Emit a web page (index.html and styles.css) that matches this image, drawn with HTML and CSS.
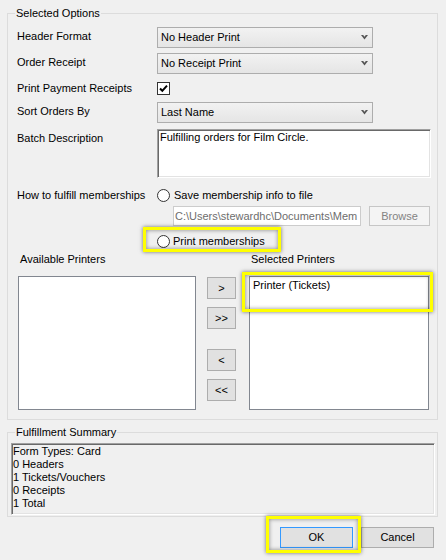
FILE: index.html
```html
<!DOCTYPE html>
<html>
<head>
<meta charset="utf-8">
<title>Fulfillment</title>
<link rel="stylesheet" href="styles.css">
</head>
<body>
<div class="dialog">
  <div class="group g1">
    <span class="legend">Selected Options</span>
    <div class="row r-a">
      <span class="lbl">Header Format</span>
      <div class="combo"><span>No Header Print</span><svg class="chev" width="7" height="5" viewBox="0 0 7 5"><polygon points="0,0 2.2,0 3.5,1.8 4.8,0 7,0 3.5,4.6" fill="#555"/></svg></div>
    </div>
    <div class="row r-b">
      <span class="lbl">Order Receipt</span>
      <div class="combo"><span>No Receipt Print</span><svg class="chev" width="7" height="5" viewBox="0 0 7 5"><polygon points="0,0 2.2,0 3.5,1.8 4.8,0 7,0 3.5,4.6" fill="#555"/></svg></div>
    </div>
    <div class="row r-c">
      <span class="lbl">Print Payment Receipts</span>
      <span class="check"><svg width="11" height="11" viewBox="0 0 11 11"><path d="M2 5.5 L4.3 7.8 L9 2.6" fill="none" stroke="#000" stroke-width="2"/></svg></span>
    </div>
    <div class="row r-d">
      <span class="lbl">Sort Orders By</span>
      <div class="combo"><span>Last Name</span><svg class="chev" width="7" height="5" viewBox="0 0 7 5"><polygon points="0,0 2.2,0 3.5,1.8 4.8,0 7,0 3.5,4.6" fill="#555"/></svg></div>
    </div>
    <div class="row r-e">
      <span class="lbl lbl-top">Batch Description</span>
      <div class="memo">Fulfilling orders for Film Circle.</div>
    </div>
    <div class="row r-f">
      <span class="lbl">How to fulfill memberships</span>
      <span class="radio"></span><span class="rtext">Save membership info to file</span>
    </div>
    <div class="row r-g">
      <div class="path"><span>C:\Users\stewardhc\Documents\Mem</span></div>
      <div class="btn btn-disabled browse">Browse</div>
    </div>
    <div class="row r-h">
      <span class="radio"></span><span class="rtext rtext-p">Print memberships</span>
    </div>
    <div class="row r-i">
      <span class="col-a plabel">Available Printers</span>
      <span class="col-b plabel">Selected Printers</span>
    </div>
    <div class="row r-j">
      <div class="list col-a"></div>
      <div class="mover">
        <div class="btn mbtn m1">&gt;</div>
        <div class="btn mbtn m2">&gt;&gt;</div>
        <div class="btn mbtn m3">&lt;</div>
        <div class="btn mbtn m4">&lt;&lt;</div>
      </div>
      <div class="list col-b"><div class="item">Printer (Tickets)</div></div>
    </div>
  </div>

  <div class="group g2">
    <span class="legend">Fulfillment Summary</span>
    <div class="summary">
      <div>Form Types: Card</div>
      <div>0 Headers</div>
      <div>1 Tickets/Vouchers</div>
      <div>0 Receipts</div>
      <div>1 Total</div>
    </div>
  </div>

  <div class="actions">
    <div class="btn abtn ok">OK</div>
    <div class="btn abtn">Cancel</div>
  </div>

  <div class="hl hl-print"></div>
  <div class="hl hl-sel"></div>
  <div class="hl hl-ok"></div>
</div>
</body>
</html>
```

FILE: styles.css
```css
* { box-sizing: border-box; }
html, body {
  margin: 0;
  padding: 0;
  width: 446px;
  height: 560px;
  background: #f0f0f0;
  overflow: hidden;
}
body {
  font-family: "Liberation Sans", Arial, sans-serif;
  font-size: 11px;
  line-height: 13px;
  color: #000;
}
.dialog {
  position: relative;
  width: 446px;
  height: 560px;
  padding: 13px 8px 0 7px;
}
.group {
  position: relative;
  border: 1px solid #dcdcdc;
  width: 431px;
}
.legend {
  position: absolute;
  top: -7px;
  left: 7px;
  padding: 0 1px;
  background: #f0f0f0;
  line-height: 13px;
  white-space: nowrap;
}
.g1 {
  height: 407px;
  padding: 0 0 0 9px;
}
.row {
  display: flex;
  align-items: center;
}
.lbl {
  width: 140px;
  flex: none;
  white-space: nowrap;
  padding-bottom: 2px;
}
.lbl-top { align-self: flex-start; margin-top: 3px; padding-bottom: 0; }
.r-a { margin-top: 13px; height: 21px; }
.r-b { margin-top: 5px; height: 21px; }
.r-c { margin-top: 6px; height: 17px; }
.r-c .lbl { padding-bottom: 0; }
.r-d { margin-top: 5px; height: 21px; }
.r-e { margin-top: 6px; height: 49px; }
.r-f { margin-top: 9px; height: 16px; }
.r-f .lbl { padding-bottom: 0; }
.r-g { margin-top: 3px; height: 20px; padding-left: 156px; }
.r-h { margin-top: 7px; height: 16px; padding-left: 140px; }
.r-i { margin-top: 3px; height: 14px; }
.r-j { margin-top: 10px; height: 134px; align-items: stretch; }

.combo {
  position: relative;
  width: 216px;
  height: 21px;
  border: 1px solid #adadad;
  background: linear-gradient(#f2f2f2, #e5e5e5);
  display: flex;
  align-items: center;
  padding-left: 3px;
  white-space: nowrap;
}
.combo span { flex: 1; }
.chev { flex: none; margin-right: 4px; margin-top: -1px; }

.check {
  width: 13px;
  height: 13px;
  border: 1px solid #333;
  background: #fff;
  display: flex;
  align-items: center;
  justify-content: center;
}
.check svg { display: block; }

.memo {
  width: 274px;
  height: 49px;
  background: #fff;
  border-top: 1px solid #a0a0a0;
  border-left: 1px solid #a0a0a0;
  border-right: 1px solid #fff;
  border-bottom: 1px solid #fff;
  box-shadow: inset 1px 1px 0 #696969, inset -1px -1px 0 #e3e3e3;
  padding: 1px 2px 0 2px;
  line-height: 13px;
}

.radio {
  width: 13px;
  height: 13px;
  border: 1px solid #333;
  border-radius: 50%;
  background: #fff;
  flex: none;
}
.rtext { margin-left: 4px; white-space: nowrap; }
.rtext-p { margin-left: 3px; }

.path {
  width: 188px;
  height: 20px;
  border: 1px solid #cccccc;
  background: #fff;
  color: #6d6d6d;
  padding-left: 1px;
  white-space: nowrap;
  overflow: hidden;
  display: flex;
  align-items: center;
}
.btn {
  border: 1px solid #adadad;
  background: #e1e1e1;
  display: flex;
  align-items: center;
  justify-content: center;
  white-space: nowrap;
}
.btn-disabled {
  background: #f4f4f4;
  border-color: #c6c6c6;
  color: #838383;
}
.browse {
  margin-left: 8px;
  width: 61px;
  height: 20px;
}

.col-a { width: 178px; flex: none; margin-left: 1px; }
.col-b { width: 180px; flex: none; margin-left: 13px; }
.plabel { padding-left: 2px; white-space: nowrap; }
.r-i .col-b { margin-left: 53px; }

.list {
  background: #fff;
  border: 1px solid #828790;
}
.item { padding: 2px 0 0 3px; line-height: 13px; }
.mover {
  width: 29px;
  margin-left: 11px;
  display: flex;
  flex-direction: column;
}
.mbtn { width: 29px; height: 22px; }
.m1 { margin-top: 1px; }
.m2 { margin-top: 8px; }
.m3 { margin-top: 20px; }
.m4 { margin-top: 8px; }

.g2 {
  margin-top: 12px;
  height: 85px;
  padding: 10px 2px 1px 3px;
}
.summary {
  height: 72px;
  width: 424px;
  background: #f0f0f0;
  border-top: 1px solid #a0a0a0;
  border-left: 1px solid #a0a0a0;
  border-right: 1px solid #fff;
  border-bottom: 1px solid #fff;
  box-shadow: inset 1px 1px 0 #696969, inset -1px -1px 0 #e3e3e3;
  padding: 1px 0 0 1px;
  line-height: 13px;
}

.actions {
  margin-top: 10px;
  margin-right: 4px;
  display: flex;
  justify-content: flex-end;
  gap: 8px;
}
.abtn { width: 73px; height: 21px; }
.ok { border-color: #3399ff; }

.hl {
  position: absolute;
  border: 3px solid #ffff00;
  box-shadow: 0 0 4px rgba(0, 0, 0, 0.55), inset 0 0 4px rgba(0, 0, 0, 0.45);
  pointer-events: none;
}
.hl-print { left: 143px; top: 227px; width: 138px; height: 25px; }
.hl-sel { left: 242px; top: 272px; width: 191px; height: 40px; }
.hl-ok { left: 266px; top: 516px; width: 95px; height: 37px; }
```
